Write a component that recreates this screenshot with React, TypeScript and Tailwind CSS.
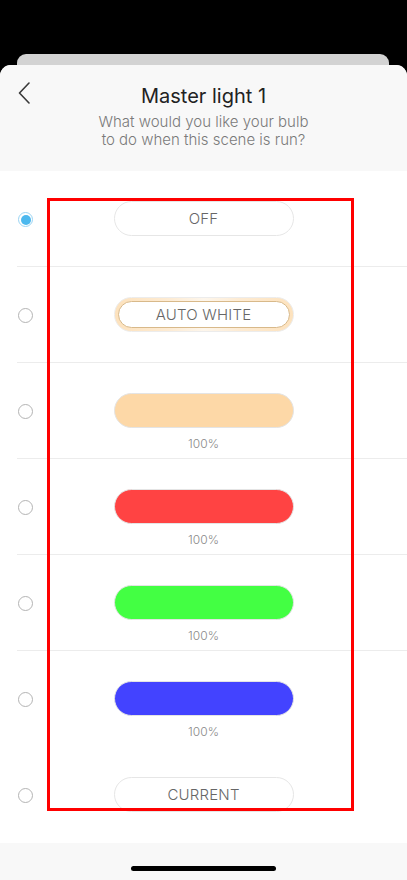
import React from 'react';

type Option = {
    id: string;
    label?: string;
    color?: string;
    kind: 'text' | 'auto' | 'color';
};

const options: Option[] = [
    { id: 'off', label: 'OFF', kind: 'text' },
    { id: 'auto', label: 'AUTO WHITE', kind: 'auto' },
    { id: 'warm', color: 'bg-[#fdd8a7]', kind: 'color' },
    { id: 'red', color: 'bg-[#ff4343]', kind: 'color' },
    { id: 'green', color: 'bg-[#43ff43]', kind: 'color' },
    { id: 'blue', color: 'bg-[#4343ff]', kind: 'color' },
    { id: 'current', label: 'CURRENT', kind: 'text' },
];

const Radio = ({ checked }: { checked: boolean }) =>
    checked ? (
        <div className="w-[15px] h-[15px] rounded-full border border-[#9ad4f3] p-[1.5px]">
            <div className="w-full h-full rounded-full bg-[#4cb8ee]" />
        </div>
    ) : (
        <div className="w-[15px] h-[15px] rounded-full border border-[#b4b4b4] bg-white" />
    );

const Pill = ({ option }: { option: Option }) => {
    if (option.kind === 'auto') {
        return (
            <div className="w-[180px] h-[35px] rounded-full p-[3px] bg-[linear-gradient(90deg,#fde2bd,#fdebd3_30%,#fdf6ec_50%,#fdebd3_70%,#fde2bd)] border border-[#ececec]">
                <div className="w-full h-full rounded-full bg-white border-[1.5px] border-[#d8b98a] flex items-center justify-center pt-[2px] text-[15px] text-[#666] font-light tracking-[0.2px]">
                    {option.label}
                </div>
            </div>
        );
    }
    if (option.kind === 'color') {
        return <div className={`w-[180px] h-[35px] rounded-full border border-[#e4e4e4] ${option.color}`} />;
    }
    return (
        <div className="w-[180px] h-[35px] rounded-full border border-[#e6e6e6] bg-white flex items-center justify-center pt-[2px] text-[15px] text-[#666] font-light tracking-[0.2px]">
            {option.label}
        </div>
    );
};

export default function App() {
    const selected = 'off';

    return (
        <div className="relative w-[407px] h-[880px] bg-black overflow-hidden font-['Inter','Liberation_Sans',sans-serif]">
            {/* stacked sheet behind */}
            <div className="pt-[54px]">
                <div className="mx-[17px] w-[372px] h-[20px] rounded-t-[9px] bg-[#d3d3d3]" />
            </div>

            <div className="-mt-[9px] h-[815px] rounded-t-[11px] bg-white flex flex-col overflow-hidden">
                <header className="bg-[#f8f8f8] h-[106px] flex-shrink-0 grid grid-cols-[50px_1fr_50px]">
                    <div className="pt-[17px] pl-[18px]">
                        <svg width="12" height="22" viewBox="0 0 12 22" fill="none">
                            <path d="M11 1 L1.5 11 L11 21" stroke="#3a3a3a" strokeWidth="1.6" strokeLinecap="round" strokeLinejoin="round" />
                        </svg>
                    </div>
                    <div className="flex flex-col items-center pt-[17px]">
                        <h1 className="text-[20px] leading-[28px] text-[#222]">Master light 1</h1>
                        <p className="mt-[3px] text-[15px] leading-[18px] text-[#7a7a7a] font-light text-center">
                            What would you like your bulb<br />to do when this scene is run?
                        </p>
                    </div>
                    <div />
                </header>

                <main className="flex-grow">
                    {options.map((option, i) => (
                        <div key={option.id} className="h-[96px] flex flex-col">
                            <div className="flex-grow grid grid-cols-[1fr_180px_1fr] pt-[30px]">
                                <div className="pl-[18px] pt-[11px]">
                                    <Radio checked={option.id === selected} />
                                </div>
                                <div className="flex flex-col items-center">
                                    <Pill option={option} />
                                    {option.kind === 'color' && (
                                        <span className="mt-[8px] text-[12px] leading-[16px] text-[#8a8a8a] font-light">100%</span>
                                    )}
                                </div>
                                <div />
                            </div>
                            {i < options.length - 2 && <div className="ml-[17px] h-px bg-[#ececec]" />}
                        </div>
                    ))}
                </main>

                <footer className="h-[37px] flex-shrink-0 bg-[#f8f8f8] flex justify-center pt-[23px]">
                    <div className="w-[145px] h-[5px] rounded-full bg-black" />
                </footer>
            </div>

            {/* annotation frame */}
            <div className="absolute left-[47px] top-[198px] w-[307px] h-[613px] border-[3px] border-[#ff0000] pointer-events-none" />
        </div>
    );
}
